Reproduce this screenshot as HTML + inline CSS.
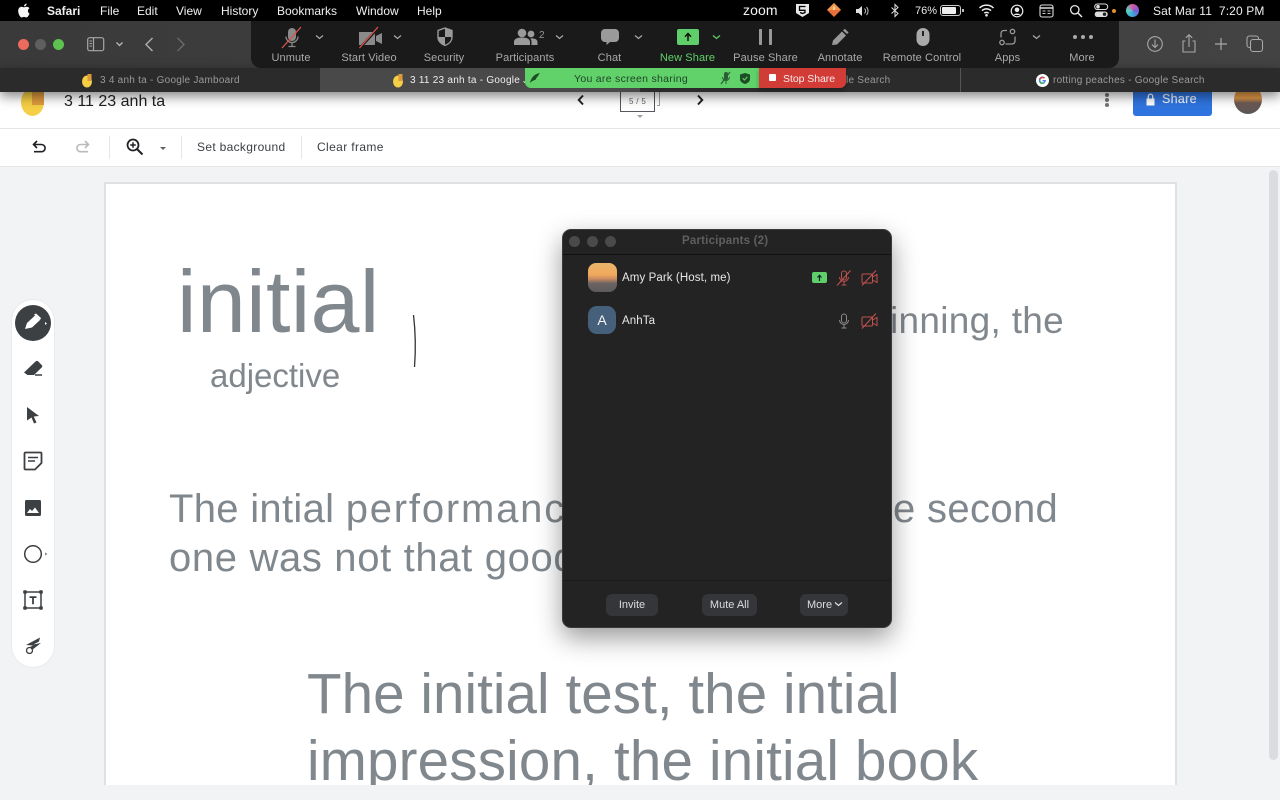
<!DOCTYPE html>
<html><head><meta charset="utf-8"><style>
html,body{margin:0;padding:0;width:1280px;height:800px;overflow:hidden;background:#f1f3f4;font-family:"Liberation Sans",sans-serif}
.a,.t{position:absolute}
.t{white-space:nowrap;line-height:1}
.m{color:#f0f0f0;font-size:12px;top:5px}
.z{color:#a9a9a9;font-size:11px;top:52.5px;transform:translateX(-50%);letter-spacing:.1px}
.tab{color:#9a9a9a;font-size:10px;top:75.5px;letter-spacing:.25px}
.s{color:#80878d}
.btn{position:absolute;top:594px;height:22px;background:#35363a;border-radius:6px;color:#ddd;font-size:11px;line-height:23px;text-align:center}
svg{position:absolute;overflow:visible}
</style></head><body>

<!-- page -->
<div class="a" style="left:0;top:92px;width:1280px;height:36px;background:#fff"></div>
<div class="a" style="left:0;top:128px;width:1280px;height:39px;background:#fff;border-top:1px solid #e4e5e7;border-bottom:1px solid #e4e5e7;box-sizing:border-box"></div>
<div class="a" style="left:104px;top:182px;width:1073px;height:603px;background:#fff;border:2px solid #dfe1e5;border-bottom:0;box-sizing:border-box"></div>
<div class="a" style="left:1269px;top:170px;width:9px;height:590px;background:#dadce0;border-radius:5px"></div>

<!-- jam header -->
<div class="a" style="left:21px;top:88px;width:23px;height:28px;background:#f5cf45;border-radius:50%"></div>
<div class="a" style="left:32px;top:92px;width:12px;height:13px;background:#dd9a3c"></div>
<div class="t" style="left:64px;top:94px;font-size:16px;color:#202124">3 11 23 anh ta</div>
<svg style="left:574px;top:93px" width="14" height="14" viewBox="0 0 14 14"><path d="M9 2.500 4.800 7 9 11.500" fill="none" stroke="#202124" stroke-width="2"/></svg>
<svg style="left:693px;top:93px" width="14" height="14" viewBox="0 0 14 14"><path d="M5 2.500 9.200 7 5 11.500" fill="none" stroke="#202124" stroke-width="2"/></svg>
<div class="a" style="left:620px;top:92px;width:35px;height:20px;border:1.500px solid #55585c;border-top:0;box-sizing:border-box;background:#fff"></div>
<div class="a" style="left:657px;top:92px;width:3px;height:14px;border:1px solid #9aa0a6;border-left:0;border-top:0;box-sizing:border-box"></div>
<div class="t" style="left:629px;top:98px;font-size:8px;color:#5f6368;letter-spacing:.3px">5 / 5</div>
<div class="a" style="left:637px;top:115px;border:3px solid transparent;border-top:3px solid #9aa0a6"></div>
<div class="a" style="left:1105px;top:93px;width:4px;height:4px;border-radius:2px;background:#70757a;box-shadow:0 5px 0 #70757a,0 10px 0 #70757a"></div>
<div class="a" style="left:1133px;top:92px;width:79px;height:24px;background:#2f74df;border-radius:0 0 3px 3px"></div>
<svg style="left:1145px;top:93px" width="11" height="13" viewBox="0 0 11 13"><path d="M1.500 5.500h8v7h-8z" fill="#fff"/><path d="M3.300 5.500V3.400a2.200 2.200 0 0 1 4.400 0v2.100" fill="none" stroke="#fff" stroke-width="1.300"/></svg>
<div class="t" style="left:1162px;top:93px;font-size:12.500px;color:#eaf1fd;letter-spacing:.3px;font-weight:500;-webkit-text-stroke:.2px #eaf1fd">Share</div>
<div class="a" style="left:1234px;top:85px;width:28px;height:29px;border-radius:50%;background:linear-gradient(#dd9a40 0,#e59a4a 45%,#6e5a54 62%,#5a5558 100%)"></div>

<!-- toolbar -->
<svg style="left:30px;top:138px" width="20" height="18" viewBox="0 0 20 18"><path d="M7 3 3.500 6.500 7 10M4 6.500h7.500a3.600 3.600 0 0 1 0 7.200H4" fill="none" stroke="#202124" stroke-width="1.600"/></svg>
<svg style="left:73px;top:138px" width="20" height="18" viewBox="0 0 20 18"><path d="M12 3l3.500 3.500L12 10M15 6.500H7.500a3.600 3.600 0 0 0 0 7.200H15" fill="none" stroke="#b8babd" stroke-width="1.600"/></svg>
<div class="a" style="left:109px;top:136px;width:1px;height:23px;background:#e4e5e7"></div>
<svg style="left:125px;top:137px" width="20" height="20" viewBox="0 0 20 20"><circle cx="8" cy="8" r="5.500" fill="none" stroke="#202124" stroke-width="1.800"/><path d="M12 12l5.500 5.500" stroke="#202124" stroke-width="2"/><path d="M8 5.200v5.600M5.200 8h5.600" stroke="#202124" stroke-width="1.500"/></svg>
<div class="a" style="left:160px;top:147px;border:3.500px solid transparent;border-top:3.500px solid #5f6368"></div>
<div class="a" style="left:181px;top:136px;width:1px;height:23px;background:#e4e5e7"></div>
<div class="t" style="left:197px;top:141px;font-size:12px;color:#3c4043;letter-spacing:.32px">Set background</div>
<div class="a" style="left:301px;top:136px;width:1px;height:23px;background:#e4e5e7"></div>
<div class="t" style="left:317px;top:141px;font-size:12px;color:#3c4043;letter-spacing:.38px">Clear frame</div>

<!-- slide text -->
<div class="t s" style="left:177px;top:258px;font-size:88px;letter-spacing:.3px">initial</div>
<div class="t s" style="left:210px;top:359px;font-size:33px">adjective</div>
<svg style="left:410px;top:312px" width="10" height="60" viewBox="0 0 10 60"><path d="M3.500 3C5.500 20 5.800 38 4.500 55" fill="none" stroke="#333" stroke-width="1.300"/></svg>
<div class="t s" style="left:890px;top:302px;font-size:37px;letter-spacing:.3px">inning, the</div>
<div class="t s" style="left:169px;top:489px;font-size:40px;letter-spacing:.3px">The intial <span style="letter-spacing:1.800px">performance</span></div>
<div class="t s" style="left:893px;top:489px;font-size:40px;letter-spacing:.35px">e second</div>
<div class="t s" style="left:169px;top:538px;font-size:40px;letter-spacing:.65px">one was not that good</div>
<div class="t s" style="left:307px;top:666px;font-size:56.500px;letter-spacing:.08px">The initial test, the intial</div>
<div class="t s" style="left:307px;top:733px;font-size:56.500px;letter-spacing:.2px">impression, the initial book</div>
<div class="a" style="left:0;top:785px;width:1269px;height:15px;background:#f1f3f4"></div>

<!-- side toolbar -->
<div class="a" style="left:11px;top:299px;width:44px;height:369px;background:#fff;border-radius:22px;border:1px solid #e8eaed;box-sizing:border-box"></div>
<div class="a" style="left:15px;top:305px;width:36px;height:36px;border-radius:50%;background:#3c4043"></div>
<svg style="left:22px;top:312px" width="24" height="22" viewBox="0 0 24 22"><path d="M3 17 5 11 13 3.500 18 8 10 15.500Z" fill="#fff"/><path d="M12 2.500l2-1 5 4.500-1 2z" fill="#fff"/><path d="M23 10l2 1.500-2 1.500z" fill="#fff"/></svg>
<svg style="left:23px;top:359px" width="22" height="20" viewBox="0 0 22 20"><path d="M1 13.500 12.500 2.500c1-.8 2-.8 2.800 0l3.500 3.600c.7.800.7 1.600 0 2.300L11 16H4.500z" fill="#3c4043"/><path d="M12 16h7" stroke="#3c4043" stroke-width="1.500"/></svg>
<svg style="left:24px;top:405px" width="18" height="20" viewBox="0 0 18 20"><path d="M3 2 15 11 9.800 11.500 12.500 17.500 10 18.500 7.500 12.500 3 15.500Z" fill="#3c4043"/></svg>
<svg style="left:23px;top:451px" width="20" height="20" viewBox="0 0 20 20"><path d="M1.500 2.500a1 1 0 0 1 1-1h15a1 1 0 0 1 1 1V12l-6.500 6.500H2.500a1 1 0 0 1-1-1z" fill="none" stroke="#3c4043" stroke-width="1.800"/><path d="M5 6.500h10M5 10h7" stroke="#3c4043" stroke-width="1.600"/></svg>
<svg style="left:24px;top:499px" width="18" height="18" viewBox="0 0 18 18"><rect x="1" y="1" width="16" height="16" rx="1.500" fill="#3c4043"/><path d="M3 14l3-4 2 2 3-3.500 4 5.500z" fill="#fff"/></svg>
<svg style="left:23px;top:544px" width="26" height="20" viewBox="0 0 26 20"><circle cx="10" cy="10" r="8.300" fill="none" stroke="#3c4043" stroke-width="1.500"/><path d="M22 8.500l2.500 1.500-2.500 1.500z" fill="#80868b"/></svg>
<svg style="left:23px;top:590px" width="20" height="20" viewBox="0 0 20 20"><path d="M2 2h16v16H2z" fill="none" stroke="#3c4043" stroke-width="1.500"/><g fill="#3c4043"><rect x=".2" y=".2" width="3.600" height="3.600" rx="1"/><rect x="16.200" y=".2" width="3.600" height="3.600" rx="1"/><rect x=".2" y="16.200" width="3.600" height="3.600" rx="1"/><rect x="16.200" y="16.200" width="3.600" height="3.600" rx="1"/></g><path d="M6.500 6.200h7v1.800h-2.600v6.200H9.100V8H6.500z" fill="#3c4043"/></svg>
<svg style="left:24px;top:636px" width="18" height="20" viewBox="0 0 18 20"><path d="M2 9 16 1.500 15 5.500 9.500 8.500 17 7 8 14 5 11.500 9 9.500z" fill="#3c4043"/><circle cx="5.500" cy="14.500" r="3" fill="#fff" stroke="#3c4043" stroke-width="1.300"/></svg>

<!-- safari toolbar -->
<div class="a" style="left:0;top:21px;width:1280px;height:47px;background:linear-gradient(90deg,#3a3a3a,#3f3f3f 50%,#424342)"></div>
<div class="a" style="left:0;top:68px;width:1280px;height:24px;background:#2b2b2b;box-shadow:0 4px 12px rgba(0,0,0,.5)"></div>
<div class="a" style="left:320px;top:68px;width:320px;height:24px;background:#494949"></div>
<div class="a" style="left:960px;top:68px;width:1px;height:24px;background:#555"></div>
<div class="a" style="left:18px;top:39px;width:11px;height:11px;border-radius:50%;background:#ed6a5e"></div>
<div class="a" style="left:35px;top:39px;width:11px;height:11px;border-radius:50%;background:#5f5f5f"></div>
<div class="a" style="left:53px;top:39px;width:11px;height:11px;border-radius:50%;background:#5dc24f"></div>
<svg style="left:87px;top:37px" width="18" height="15" viewBox="0 0 18 15"><rect x=".7" y=".7" width="16" height="13" rx="2" fill="none" stroke="#a8a8a8" stroke-width="1.200"/><path d="M6.500 1v13" stroke="#a8a8a8" stroke-width="1.200"/><path d="M2.500 4h2.500M2.500 6.500h2.500M2.500 9h2.500" stroke="#a8a8a8"/></svg>
<svg style="left:115px;top:41px" width="9" height="7" viewBox="0 0 9 7"><path d="M1.500 1.500 4.500 4.500 7.500 1.500" fill="none" stroke="#bbb" stroke-width="1.300"/></svg>
<svg style="left:143px;top:36px" width="12" height="17" viewBox="0 0 12 17"><path d="M9.500 2 3 8.500l6.500 6.500" fill="none" stroke="#b0b0b0" stroke-width="1.400"/></svg>
<svg style="left:175px;top:36px" width="12" height="17" viewBox="0 0 12 17"><path d="M2.500 2 9 8.500 2.500 15" fill="none" stroke="#6a6a6a" stroke-width="1.400"/></svg>
<svg style="left:1145px;top:34px" width="20" height="20" viewBox="0 0 20 20"><circle cx="10" cy="10" r="7.300" fill="none" stroke="#a8a8a8" stroke-width="1.100"/><path d="M10 5.500v8M7 10.500l3 3 3-3" fill="none" stroke="#a8a8a8" stroke-width="1.100"/></svg>
<svg style="left:1180px;top:33px" width="18" height="22" viewBox="0 0 18 22"><path d="M5.500 8H3v11h12V8h-2.500" fill="none" stroke="#a8a8a8" stroke-width="1.100"/><path d="M9 14V2M5.800 4.800 9 1.800l3.200 3" fill="none" stroke="#a8a8a8" stroke-width="1.100"/></svg>
<svg style="left:1214px;top:37px" width="14" height="14" viewBox="0 0 14 14"><path d="M7 1v12M1 7h12" stroke="#a8a8a8" stroke-width="1.200"/></svg>
<svg style="left:1246px;top:35px" width="18" height="18" viewBox="0 0 18 18"><rect x="1" y="1" width="11.500" height="11.500" rx="2.500" fill="none" stroke="#a8a8a8" stroke-width="1.100"/><rect x="4.500" y="4.500" width="12" height="12" rx="2.500" fill="#404040" stroke="#a8a8a8" stroke-width="1.100"/></svg>

<!-- tabs -->
<svg style="left:81px;top:73px" width="12" height="15" viewBox="0 0 12 15"><ellipse cx="6" cy="8.500" rx="5" ry="6" fill="#f5cf45"/><rect x="6.500" y="1" width="4" height="7" fill="#dd9a3c"/></svg>
<div class="t tab" style="left:100px">3 4 anh ta - Google Jamboard</div>
<svg style="left:392px;top:73px" width="12" height="15" viewBox="0 0 12 15"><ellipse cx="6" cy="8.500" rx="5" ry="6" fill="#f5cf45"/><rect x="6.500" y="1" width="4" height="7" fill="#dd9a3c"/></svg>
<div class="t tab" style="left:410px;color:#eee">3 11 23 anh ta - Google Jamboard</div>
<div class="t tab" style="left:846px">le Search</div>
<svg style="left:1036px;top:74px" width="13" height="13" viewBox="0 0 13 13"><circle cx="6.500" cy="6.500" r="6.500" fill="#fff"/><path d="M10 6H6.500v1.500h2A2.200 2.200 0 1 1 8 4.600l1-1A3.600 3.600 0 1 0 10 6z" fill="#4285f4"/><path d="M3 5 4 5.800A2.700 2.700 0 0 1 8 4.600l1-1A3.900 3.900 0 0 0 3 5z" fill="#ea4335"/><path d="M3 8l1-.8a2.500 2.500 0 0 0 3.800 1l1 .9A3.800 3.800 0 0 1 3 8z" fill="#34a853"/></svg>
<div class="t tab" style="left:1053px">rotting peaches - Google Search</div>

<!-- zoom toolbar -->
<div class="a" style="left:251px;top:21px;width:868px;height:47px;background:#1a1a1a;border-radius:0 0 10px 10px"></div>
<svg style="left:280px;top:26px" width="24" height="24" viewBox="0 0 24 24"><rect x="8" y="2" width="8" height="13" rx="4" fill="#8a8a8a"/><path d="M6 10.500a6 6 0 0 0 12 0M12 16.500V20M8.500 20.500h7" fill="none" stroke="#8a8a8a" stroke-width="1.300"/><path d="M2 22 21 1" stroke="#d9534f" stroke-width="1.300"/></svg>
<svg style="left:358px;top:26px" width="26" height="24" viewBox="0 0 26 24"><path d="M1 6h15a1 1 0 0 1 1 1v11a1 1 0 0 1-1 1H1z" fill="#8a8a8a"/><path d="M18 10l6-3v11l-6-3z" fill="#8a8a8a"/><path d="M1 23 21 1" stroke="#1a1a1a" stroke-width="2.500"/><path d="M1.500 22 20 1" stroke="#d9534f" stroke-width="1.300"/></svg>
<svg style="left:436px;top:27px" width="18" height="20" viewBox="0 0 18 20"><path d="M9 1 16 3.500V10c0 4-3 7-7 8.500C5 17 2 14 2 10V3.500z" fill="none" stroke="#9a9a9a" stroke-width="1.400"/><path d="M9 1 16 3.500V10H9zM9 10H2c0 4 3 7 7 8.500z" fill="#9a9a9a"/></svg>
<svg style="left:514px;top:28px" width="24" height="18" viewBox="0 0 24 18"><circle cx="8" cy="5" r="4.300" fill="#9a9a9a"/><circle cx="17" cy="6" r="3.400" fill="#9a9a9a"/><path d="M0 17v-3c0-3 3-4.500 8-4.500s8 1.500 8 4.500v3zM17.500 17v-3.500c0-1.200-.4-2-1.300-3 4-.5 7.300.8 7.300 3.500v3z" fill="#9a9a9a"/></svg>
<svg style="left:600px;top:28px" width="20" height="19" viewBox="0 0 20 19"><path d="M5 1h10a4 4 0 0 1 4 4v5a4 4 0 0 1-4 4H10l-3.500 3v-3H5a4 4 0 0 1-4-4V5a4 4 0 0 1 4-4z" fill="#9a9a9a"/></svg>
<div class="a" style="left:677px;top:29px;width:22px;height:16px;background:#5fd069;border-radius:2px"></div>
<svg style="left:683px;top:32px" width="10" height="10" viewBox="0 0 10 10"><path d="M5 9V2M2 4.800 5 1.500l3 3.300" fill="none" stroke="#111" stroke-width="1.500"/></svg>
<svg style="left:755px;top:28px" width="20" height="18" viewBox="0 0 20 18"><rect x="4" y="1" width="3" height="16" rx=".7" fill="#999"/><rect x="14" y="1" width="3" height="16" rx=".7" fill="#999"/></svg>
<svg style="left:831px;top:28px" width="18" height="18" viewBox="0 0 18 18"><path d="M1 17 2 12.500 11 3.500 15 7.500 6 16.500zM12 2.500l1.800-1.800 3.800 3.800L16 6z" fill="#999"/></svg>
<svg style="left:915px;top:27px" width="16" height="20" viewBox="0 0 16 20"><rect x="1.500" y="1" width="13" height="18" rx="6.500" fill="#aaa"/><rect x="7" y="4" width="2" height="5" fill="#222"/></svg>
<svg style="left:999px;top:28px" width="18" height="18" viewBox="0 0 18 18"><path d="M8 2.500H5a3 3 0 0 0-3 3v4M6.500 16H13a3 3 0 0 0 3-3V8.500" fill="none" stroke="#999" stroke-width="1.300"/><circle cx="13.500" cy="3.500" r="2.200" fill="none" stroke="#999" stroke-width="1.300"/><circle cx="3" cy="14.500" r="2.200" fill="none" stroke="#999" stroke-width="1.300"/></svg>
<div class="a" style="left:1073px;top:35px;width:4px;height:4px;border-radius:50%;background:#a9a9a9;box-shadow:8px 0 0 #a9a9a9,16px 0 0 #a9a9a9"></div>
<div class="t" style="left:539px;top:31px;font-size:10px;color:#999">2</div>
<svg style="left:315px;top:34px" width="9" height="7" viewBox="0 0 9 7"><path d="M1 1.500 4.500 4.500 8 1.500" fill="none" stroke="#aaa" stroke-width="1.200"/></svg>
<svg style="left:393px;top:34px" width="9" height="7" viewBox="0 0 9 7"><path d="M1 1.500 4.500 4.500 8 1.500" fill="none" stroke="#aaa" stroke-width="1.200"/></svg>
<svg style="left:555px;top:34px" width="9" height="7" viewBox="0 0 9 7"><path d="M1 1.500 4.500 4.500 8 1.500" fill="none" stroke="#aaa" stroke-width="1.200"/></svg>
<svg style="left:634px;top:34px" width="9" height="7" viewBox="0 0 9 7"><path d="M1 1.500 4.500 4.500 8 1.500" fill="none" stroke="#aaa" stroke-width="1.200"/></svg>
<svg style="left:712px;top:34px" width="9" height="7" viewBox="0 0 9 7"><path d="M1 1.500 4.500 4.500 8 1.500" fill="none" stroke="#5fd069" stroke-width="1.200"/></svg>
<svg style="left:1032px;top:34px" width="9" height="7" viewBox="0 0 9 7"><path d="M1 1.500 4.500 4.500 8 1.500" fill="none" stroke="#aaa" stroke-width="1.200"/></svg>
<div class="t z" style="left:291px">Unmute</div>
<div class="t z" style="left:369px">Start Video</div>
<div class="t z" style="left:444px">Security</div>
<div class="t z" style="left:525px">Participants</div>
<div class="t z" style="left:609.5px">Chat</div>
<div class="t z" style="left:687.5px;color:#5fd069">New Share</div>
<div class="t z" style="left:765.5px">Pause Share</div>
<div class="t z" style="left:840px">Annotate</div>
<div class="t z" style="left:922px">Remote Control</div>
<div class="t z" style="left:1007.5px">Apps</div>
<div class="t z" style="left:1082px">More</div>

<!-- sharing banner -->
<div class="a" style="left:525px;top:68px;width:235px;height:20px;background:#61d169;border-radius:0 0 0 6px"></div>
<div class="a" style="left:759px;top:68px;width:87px;height:20px;background:#d13c37;border-radius:0 0 6px 0;box-shadow:0 2px 5px rgba(0,0,0,.3)"></div>
<svg style="left:528px;top:71px" width="14" height="14" viewBox="0 0 14 14"><path d="M2 12C3 7 6 3 12 2 10 4 10 6 8 7 9 8 7 9 5.500 9.500 4 10 3 11 2 12z" fill="#1d4d24"/></svg>
<div class="t" style="left:574px;top:73.5px;font-size:10.500px;color:#20452a;letter-spacing:.29px">You are screen sharing</div>
<svg style="left:720px;top:71px" width="12" height="14" viewBox="0 0 12 14"><rect x="4" y="1" width="4" height="8" rx="2" fill="#2c5d36"/><path d="M2.500 6a3.500 3.500 0 0 0 7 0M6 10v3" fill="none" stroke="#2c5d36"/><path d="M1 13 10 1" stroke="#2c5d36" stroke-width="1.200"/></svg>
<svg style="left:739px;top:72px" width="12" height="13" viewBox="0 0 12 13"><path d="M6 1 11 2.500V7c0 2.500-2 4-5 5C3 11 1 9.500 1 7V2.500z" fill="#1d4d24"/><path d="M3.700 6.200 5.500 8 8.400 4.800" fill="none" stroke="#61d169" stroke-width="1.100"/></svg>
<div class="a" style="left:769px;top:74px;width:7px;height:7px;background:#fff;border-radius:1px"></div>
<div class="t" style="left:783px;top:73.5px;font-size:10.500px;color:#fbeaea;letter-spacing:-.05px">Stop Share</div>

<!-- menu bar -->
<div class="a" style="left:0;top:0;width:1280px;height:21px;background:#000"></div>
<svg style="left:17px;top:3px" width="14" height="15" viewBox="0 0 14 15"><path d="M9.500 3.700c-1 0-1.800.6-2.500.6s-1.500-.6-2.500-.6C3 3.700 1.200 5 1.200 8c0 3 2 6.500 3.500 6.500.9 0 1.300-.6 2.300-.6s1.400.6 2.300.6c1.300 0 2.600-2.200 3.200-4-1.600-.6-2.500-3.800 0-5.300-.6-.9-1.700-1.500-3-1.500z" fill="#f5f5f5"/><path d="M7 3.400C7 2 8.200.7 9.600.5c.1 1.600-1.100 3-2.600 2.900z" fill="#f5f5f5"/></svg>
<div class="t m" style="left:47px;font-weight:bold">Safari</div>
<div class="t m" style="left:100px">File</div>
<div class="t m" style="left:137px">Edit</div>
<div class="t m" style="left:176px">View</div>
<div class="t m" style="left:221px">History</div>
<div class="t m" style="left:277px">Bookmarks</div>
<div class="t m" style="left:356px">Window</div>
<div class="t m" style="left:417px">Help</div>
<div class="t" style="left:743px;top:3px;font-size:14px;color:#f2f2f2;letter-spacing:.1px">zoom</div>
<svg style="left:795px;top:3px" width="15" height="15" viewBox="0 0 15 15"><path d="M1 1h13v9l-6.500 4L1 10z" fill="#e8e8e8"/><path d="M10.500 3.500h-6v3.800h5.500v2.200l-2.500 1-2.500-1" fill="none" stroke="#000" stroke-width="1.300"/></svg>
<svg style="left:826px;top:2px" width="16" height="16" viewBox="0 0 16 16"><path d="M8 1 15 8 8 15 1 8z" fill="#e8703a"/><path d="M8 1 15 8H1z" fill="#f29a4c"/><path d="M8 4.500 8 8" stroke="#ffe0c0" stroke-width="1.500"/></svg>
<svg style="left:855px;top:4px" width="18" height="14" viewBox="0 0 18 14"><path d="M1 5h2.500L7 2v10L3.500 9H1z" fill="#e0e0e0"/><path d="M9.500 4.500a3.500 3.500 0 0 1 0 5M11.500 3a6 6 0 0 1 0 8" fill="none" stroke="#bbb"/></svg>
<svg style="left:890px;top:3px" width="10" height="15" viewBox="0 0 10 15"><path d="M1.500 4.500 8 10.500 5 13.500V1.500L8 4.500 1.500 10.500" fill="none" stroke="#e0e0e0"/></svg>
<div class="t" style="left:915px;top:5.500px;font-size:11px;color:#e8e8e8">76%</div>
<div class="a" style="left:940px;top:5px;width:21px;height:11px;border:1px solid #ccc;border-radius:3px;box-sizing:border-box"></div>
<div class="a" style="left:942px;top:7px;width:14px;height:7px;background:#eee;border-radius:1px"></div>
<div class="a" style="left:962px;top:9px;width:1.500px;height:3px;background:#bbb"></div>
<svg style="left:978px;top:3px" width="17" height="14" viewBox="0 0 17 14"><path d="M1.500 5a10 10 0 0 1 14 0M4 7.700a6.500 6.500 0 0 1 9 0M6.300 10.200a3.200 3.200 0 0 1 4.400 0" fill="none" stroke="#f0f0f0" stroke-width="1.500"/><circle cx="8.500" cy="12.300" r="1.300" fill="#f0f0f0"/></svg>
<svg style="left:1010px;top:4px" width="14" height="14" viewBox="0 0 14 14"><circle cx="7" cy="7" r="5.800" fill="none" stroke="#e8e8e8" stroke-width="1.200"/><circle cx="7" cy="5.800" r="2.300" fill="#e8e8e8"/><path d="M3.500 11a4 3 0 0 1 7 0z" fill="#e8e8e8"/></svg>
<svg style="left:1039px;top:4px" width="15" height="14" viewBox="0 0 15 14"><rect x="1" y="1" width="13" height="12" rx="2" fill="none" stroke="#ddd" stroke-width="1.100"/><path d="M1 4h13" stroke="#ddd" stroke-width="1.500"/><path d="M3.500 7h3M3.500 9.500h3M8.500 7h3M8.500 9.500h3" stroke="#ccc"/></svg>
<svg style="left:1069px;top:4px" width="14" height="14" viewBox="0 0 14 14"><circle cx="5.800" cy="5.800" r="4.200" fill="none" stroke="#e8e8e8" stroke-width="1.300"/><path d="M9 9l4 4" stroke="#e8e8e8" stroke-width="1.500"/></svg>
<svg style="left:1094px;top:3px" width="16" height="15" viewBox="0 0 16 15"><rect x=".7" y="1" width="13" height="5.500" rx="2.700" fill="none" stroke="#ddd"/><circle cx="4" cy="3.700" r="1.800" fill="#ddd"/><rect x=".7" y="8.500" width="13" height="5.500" rx="2.700" fill="#ddd"/><circle cx="10.500" cy="11.200" r="1.700" fill="#222"/></svg>
<div class="a" style="left:1112px;top:9px;width:4px;height:4px;border-radius:50%;background:#e09030"></div>
<div class="a" style="left:1126px;top:4px;width:13px;height:13px;border-radius:50%;background:conic-gradient(#d658a0,#7a5ad8,#3fa7d8,#58d0c0,#d658a0)"></div>
<div class="t" style="left:1153px;top:4.500px;font-size:12px;color:#efefef;letter-spacing:.12px">Sat Mar 11&nbsp;&nbsp;7:20 PM</div>

<!-- participants -->
<div class="a" style="left:562px;top:229px;width:330px;height:399px;background:#232323;border:1px solid #3a3a3a;border-radius:9px;box-sizing:border-box;box-shadow:0 10px 26px rgba(0,0,0,.4)"></div>
<div class="a" style="left:563px;top:254px;width:328px;height:1px;background:#111"></div>
<div class="a" style="left:569px;top:236px;width:11px;height:11px;border-radius:50%;background:#4a4a4a;box-shadow:18px 0 0 #4a4a4a,36px 0 0 #4a4a4a"></div>
<div class="t" style="left:682px;top:236px;font-size:11.500px;font-weight:bold;color:#5f5f5f;letter-spacing:.2px">Participants (2)</div>
<div class="a" style="left:588px;top:263px;width:29px;height:29px;border-radius:8px;background:linear-gradient(#e9b66c 0,#f1a95c 40%,#c98a60 55%,#6c6363 70%,#5d5a5c 100%)"></div>
<div class="t" style="left:622px;top:272.500px;font-size:11.500px;color:#e8e8e8;letter-spacing:.1px">Amy Park (Host, me)</div>
<div class="a" style="left:812px;top:272px;width:15px;height:11px;background:#5fd069;border-radius:2px"></div>
<svg style="left:815px;top:273px" width="9" height="9" viewBox="0 0 9 9"><path d="M4.500 8V2.500M2.500 4.500l2-2.200 2 2.200" fill="none" stroke="#123" stroke-width="1.200"/></svg>
<svg style="left:836px;top:270px" width="16" height="16" viewBox="0 0 16 16"><rect x="5.500" y="1" width="5" height="9" rx="2.500" fill="none" stroke="#b9504c"/><path d="M3.500 7a4.500 4.500 0 0 0 9 0M8 12v2.500M5.500 15h5" fill="none" stroke="#b9504c"/><path d="M1 15.500 14.500 .5" stroke="#c9544f"/></svg>
<svg style="left:861px;top:270px" width="17" height="16" viewBox="0 0 17 16"><rect x="1" y="4" width="10.500" height="9" rx="1" fill="none" stroke="#c0524e"/><path d="M11.500 7l4.500-2.500v8L11.500 10" fill="none" stroke="#c0524e"/><path d="M1 15.500 15 .5" stroke="#c9544f"/></svg>
<div class="a" style="left:588px;top:306px;width:28px;height:28px;border-radius:9px;background:#46607c;color:#f5f5f5;font-size:14px;line-height:29px;text-align:center">A</div>
<div class="t" style="left:622px;top:315.500px;font-size:11.500px;color:#e8e8e8;letter-spacing:.1px">AnhTa</div>
<svg style="left:836px;top:313px" width="16" height="16" viewBox="0 0 16 16"><rect x="5.500" y="1" width="5" height="9" rx="2.500" fill="none" stroke="#8a8a8a"/><path d="M3.500 7a4.500 4.500 0 0 0 9 0M8 12v2.500M5.500 15h5" fill="none" stroke="#8a8a8a"/></svg>
<svg style="left:861px;top:313px" width="17" height="16" viewBox="0 0 17 16"><rect x="1" y="4" width="10.500" height="9" rx="1" fill="none" stroke="#c0524e"/><path d="M11.500 7l4.500-2.500v8L11.500 10" fill="none" stroke="#c0524e"/><path d="M1 15.500 15 .5" stroke="#c9544f"/></svg>
<div class="a" style="left:563px;top:580px;width:328px;height:1px;background:#1b1b1b"></div>
<div class="btn" style="left:606px;width:52px">Invite</div>
<div class="btn" style="left:702px;width:55px">Mute All</div>
<div class="btn" style="left:800px;width:48px;text-align:left;text-indent:7px">More</div>
<svg style="left:834px;top:601px" width="9" height="7" viewBox="0 0 9 7"><path d="M1 1.500 4.500 4.500 8 1.500" fill="none" stroke="#e0e0e0" stroke-width="1.200"/></svg>
</body></html>
